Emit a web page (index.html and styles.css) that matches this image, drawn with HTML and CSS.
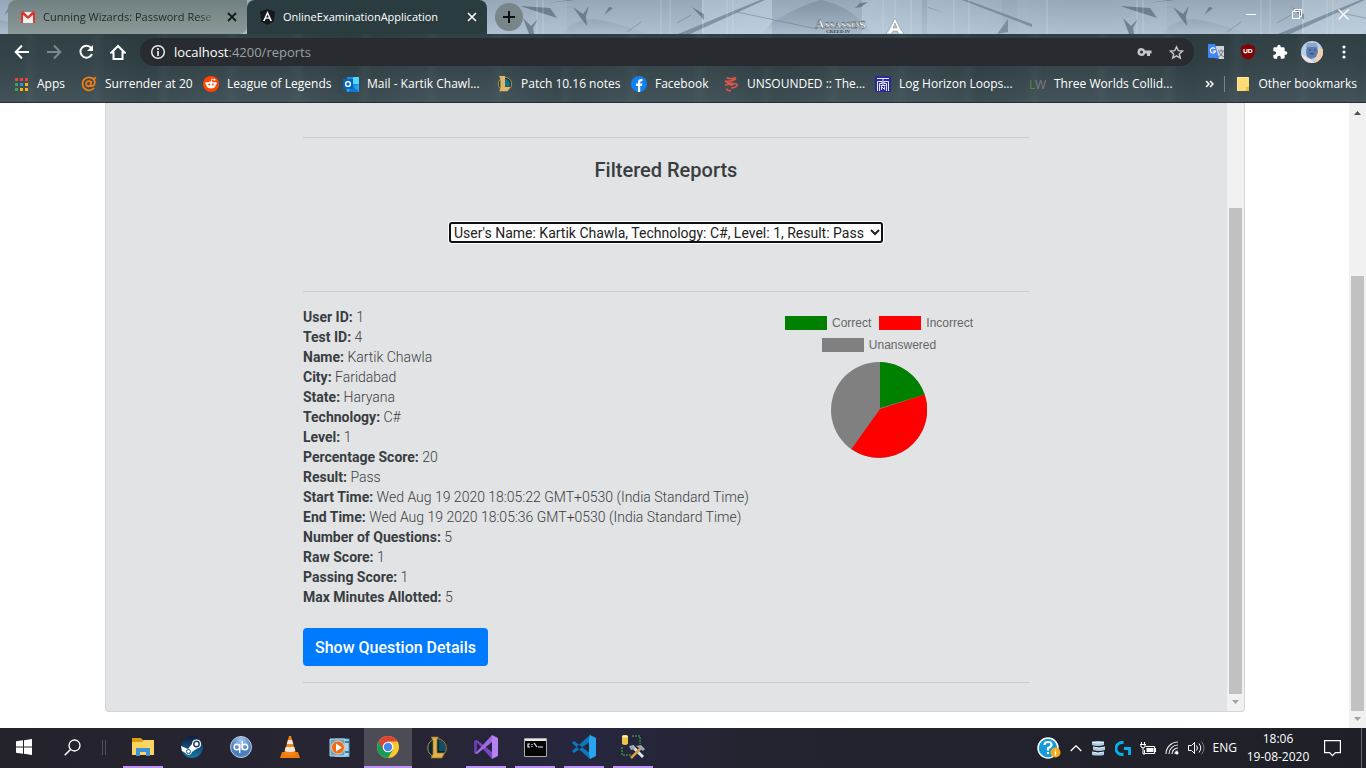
FILE: index.html
```html
<!DOCTYPE html>
<html lang="en">
<head>
<meta charset="utf-8">
<title>OnlineExaminationApplication</title>
<link rel="stylesheet" href="styles.css">
</head>
<body>
<header class="browser">
  <div class="tabstrip">
    <svg class="scene" width="100%" height="34" aria-hidden="true">
      <defs>
        <linearGradient id="sky" x1="0" x2="0" y1="0" y2="1"><stop offset="0" stop-color="#96a8b8"/><stop offset="1" stop-color="#adbfd0"/></linearGradient>
        <linearGradient id="glow"><stop offset="0" stop-color="#dbe8f4" stop-opacity="0"/><stop offset=".5" stop-color="#dbe8f4" stop-opacity=".4"/><stop offset="1" stop-color="#dbe8f4" stop-opacity="0"/></linearGradient>
        <linearGradient id="haze" x1="0" x2="0" y1="0" y2="1"><stop offset="0" stop-color="#6d8091" stop-opacity=".5"/><stop offset="1" stop-color="#6d8091" stop-opacity=".05"/></linearGradient>
        <pattern id="shards" width="600" height="34" patternUnits="userSpaceOnUse" x="487">
          <path d="M20 0h60v34H20zM215 0h70v34h-70zM375 0h60v34h-60zM440 0h75v34h-75zM530 0h50v34h-50z" fill="url(#glow)"/>
          <path d="M75 34q10-14 32-15 20 2 53 15zM285 22q35-20 50-22 25 6 40 22l12 12H275z" fill="url(#haze)"/>
          <path d="M33 6l30 2 7 10zM36 18l8 8 7-7-5 9 1 6h-5zM86 7l10 7 6-8-3 10 1 10-7-9zM117 15l5-8 4 1zM60 3L82 0h6zM205 7l12 7v6zM368 8l5-5 8-1-7 5zM441 7l16 6-15-5z" fill="#4f6273" opacity=".65"/>
          <path d="M191 34L273 0h5L203 34zM475 0l5 0 65 24 0 3zM510 34l11-15v13z" fill="#5f7283" opacity=".6"/>
          <path d="M250 12l80 17M190 23l14-8M140 32l14-10" stroke="#667888" opacity=".5"/>
          <path d="M50 0v34M56 0v34M174 0v34M183 0v34M216 0v34M240 0v34M246 0v34M396 0v34M408 0v34M424 0v34M467 0v34M482 0v34M560 0v34" stroke="#dfeaf5" opacity=".3"/>
        </pattern>
      </defs>
      <rect width="100%" height="34" fill="url(#sky)"/>
      <rect width="100%" height="34" fill="url(#shards)"/>
      <text x="815" y="28" font-family="Liberation Serif, serif" font-size="13" font-weight="bold" fill="#fff" stroke="#303840" stroke-width=".3">A<tspan font-size="9">SSASSIN</tspan></text>
      <text x="859" y="29" font-family="Liberation Serif, serif" font-size="13" font-weight="bold" fill="#fff" stroke="#303840" stroke-width=".3">S</text>
      <text x="826" y="33" font-family="Liberation Serif, serif" font-size="5" font-weight="bold" fill="#39424b">CREED IV</text>
      <path d="M895 18l5.500 11 3.500 5h-5l-2-3h-4l-2 3h-5l3.500-5zM895 23l-2 5h4z" fill="#fff" fill-rule="evenodd" stroke="#5b6873" stroke-width=".4"/>
    </svg>
    <div class="tabs">
      <div class="tab tab-idle">
        <svg width="14" height="12" viewBox="0 0 14 12"><path d="M0 1h14v11H0z" fill="#f1efec"/><path d="M0 1v11h2V4l5 4 5-4v8h2V1l-2-1-5 5-5-5z" fill="#d9392e"/></svg>
        <span class="tab-title fade">Cunning Wizards: Password Rese</span>
        <button class="close" aria-label="Close tab"><svg width="10" height="10" viewBox="0 0 10 10"><path d="M1 1l8 8M9 1L1 9" stroke="#16191b" stroke-width="1.800"/></svg></button>
      </div>
      <div class="tab tab-active">
        <svg width="15" height="16" viewBox="0 0 15 16"><path d="M7.500 0L15 2.600l-1.200 10L7.500 16l-6.300-3.400L0 2.600z" fill="#15181d"/><path d="M7.500 2L3 12h1.800l.9-2.300h3.600l.9 2.300H12zM7.500 5.500L8.800 8.400H6.200z" fill="#fff" fill-rule="evenodd"/></svg>
        <span class="tab-title">OnlineExaminationApplication</span>
        <button class="close" aria-label="Close tab"><svg width="10" height="10" viewBox="0 0 10 10"><path d="M1 1l8 8M9 1L1 9" stroke="#fff" stroke-width="1.600"/></svg></button>
      </div>
      <button class="newtab" aria-label="New tab"><svg width="12" height="12" viewBox="0 0 12 12"><path d="M6 0v12M0 6h12" stroke="#0c0e0f" stroke-width="2"/></svg></button>
      <div class="window-buttons">
        <button aria-label="Minimize"><svg width="11" height="11"><path d="M0 5.500h10" stroke="#fff"/></svg></button>
        <button aria-label="Restore"><svg width="11" height="11"><path d="M.5 2.500h7v7h-7zM2.500 2.500v-2h7v7h-2" fill="none" stroke="#fff"/></svg></button>
        <button aria-label="Close"><svg width="11" height="11"><path d="M.5.5l10 10M10.500.5l-10 10" stroke="#fff" stroke-width="1.200"/></svg></button>
      </div>
    </div>
  </div>

  <div class="toolbar">
    <nav class="nav-buttons">
      <button aria-label="Back"><svg width="16" height="16" viewBox="0 0 16 16"><path d="M15 8H2M8 1.500L1.700 8 8 14.500" fill="none" stroke="#fff" stroke-width="2"/></svg></button>
      <button aria-label="Forward"><svg width="16" height="16" viewBox="0 0 16 16"><path d="M1 8h13M8 1.500L14.300 8 8 14.500" fill="none" stroke="#7f898d" stroke-width="2"/></svg></button>
      <button aria-label="Reload"><svg width="16" height="16" viewBox="0 0 16 16"><path d="M13.200 4A6 6 0 1 0 14 10" fill="none" stroke="#fff" stroke-width="2"/><path d="M15 1v6H9z" fill="#fff"/></svg></button>
      <button aria-label="Home"><svg width="16" height="16" viewBox="0 0 16 16"><path d="M1.500 8.500L8 2l6.500 6.500H12.500V15h-9V8.500z" fill="none" stroke="#fff" stroke-width="2"/></svg></button>
    </nav>
    <div class="omnibox">
      <svg width="16" height="16" viewBox="0 0 16 16"><circle cx="8" cy="8" r="6.300" fill="none" stroke="#e8eaed" stroke-width="1.500"/><path d="M8 7v5M8 4v2" stroke="#e8eaed" stroke-width="1.700"/></svg>
      <span class="url"><b>localhost</b>:4200/reports</span>
      <svg class="key" width="15" height="10" viewBox="0 0 15 10"><path d="M4.500 1a4 4 0 1 0 3.700 5.500H10V9h3V6.500h1.500v-3H8.200A4 4 0 0 0 4.500 1zm0 2.500a1.500 1.500 0 1 1 0 3 1.500 1.500 0 0 1 0-3z" fill="#c4c6c8" fill-rule="evenodd"/></svg>
      <svg width="15" height="15" viewBox="0 0 15 15"><path d="M7.500 1.800l1.800 3.900 4.200.4-3.200 2.800 1 4.200-3.800-2.300-3.800 2.300 1-4.200L1.500 6.100l4.200-.4z" fill="none" stroke="#c8cacc" stroke-width="1.400"/></svg>
    </div>
    <div class="extensions">
      <svg width="18" height="16" viewBox="0 0 18 16"><path d="M8 2h9v13H9z" fill="#d2d4d7"/><path d="M11 7h6M14 5v2m2 0q-1 5-5 6m1-5q2 4 5 5" stroke="#75808a" fill="none"/><path d="M1 0h7l4 14H2a1 1 0 0 1-1-1z" fill="#4285f4"/><path d="M8 14h4l-2 2z" fill="#2553bb"/><path d="M8 4.800A2.600 2.600 0 1 0 8.500 7H6" stroke="#fff" stroke-width="1.200" fill="none"/></svg>
      <svg width="16" height="16" viewBox="0 0 16 16"><path d="M8 0l7 2.500V8q0 5-7 8-7-3-7-8V2.500z" fill="#800308"/><path d="M4 5v3q1.500 1.500 3 0V5M8.800 5v4M8.800 5.500h1.700a1.500 1.500 0 0 1 0 3H8.800" stroke="#fff" stroke-width="1.200" fill="none"/></svg>
      <svg width="16" height="16" viewBox="0 0 24 24"><path d="M20.500 11H19V7a2 2 0 0 0-2-2h-4V3.500a2.500 2.500 0 0 0-5 0V5H4a2 2 0 0 0-2 2v3.800h1.500a2.700 2.700 0 0 1 0 5.400H2V20a2 2 0 0 0 2 2h3.800v-1.500a2.700 2.700 0 0 1 5.400 0V22H17a2 2 0 0 0 2-2v-4h1.500a2.500 2.500 0 0 0 0-5z" fill="#fff"/></svg>
      <svg width="22" height="22" viewBox="0 0 22 22"><defs><clipPath id="face"><circle cx="11" cy="11" r="11"/></clipPath></defs><g clip-path="url(#face)"><path fill="#b9cde4" d="M0 0h22v22H0z"/><path d="M14 8h8v14h-8z" fill="#efd0b0"/><path d="M6 5q5-3 10 0l1 6-2 5-5 2-4-1-1-6z" fill="#5b7db0"/><path d="M6 2h9l2 4H5z" fill="#8aa6c8"/><path d="M0 13l8 4 6 5H0z" fill="#ebe4de"/><path d="M8 9h2M13 9h2M9 13q2-1 4 0" stroke="#26426e" stroke-width="1.200" fill="none"/></g></svg>
      <svg width="4" height="14" viewBox="0 0 4 14"><g fill="#fff"><circle cx="2" cy="2" r="1.600"/><circle cx="2" cy="7" r="1.600"/><circle cx="2" cy="12" r="1.600"/></g></svg>
    </div>
  </div>

  <nav class="bookmarks">
    <a href="#"><svg width="15" height="15" viewBox="0 0 15 15"><path d="M1 1h3v3H1zM6 1h3v3H6zM11 1h3v3h-3z" fill="#ea4335"/><path d="M1 6h3v3H1zM1 11h3v3H1z" fill="#34a853"/><path d="M6 6h3v3H6z" fill="#4285f4"/><path d="M11 6h3v3h-3zM6 11h3v3H6zM11 11h3v3h-3z" fill="#fbb605"/></svg><span>Apps</span></a>
    <a href="#"><svg width="16" height="16" viewBox="0 0 16 16"><path d="M12.500 3.200A6.500 6.500 0 1 0 13 12M10.500 5L9.300 9.500q2.700 1.500 4.200-1.500.8-2-.5-4.500M10 6.500A2.600 2.600 0 1 0 9.300 9.700M11.500 3.500L15 1.500" fill="none" stroke="#f57d12" stroke-width="1.800"/></svg><span>Surrender at 20</span></a>
    <a href="#"><svg width="16" height="16" viewBox="0 0 16 16"><circle cx="8" cy="8" r="8" fill="#ff4500"/><ellipse cx="8" cy="9" rx="4.800" ry="3.500" fill="#fff"/><circle cx="3.500" cy="7.300" r="1.300" fill="#fff"/><circle cx="12.500" cy="7.300" r="1.300" fill="#fff"/><path d="M8 6l.8-3 2.700.7M6 10.700q2 1.300 4 0" fill="none" stroke="#fff" stroke-width=".8"/><circle cx="11.500" cy="3.700" r="1" fill="#fff"/><circle cx="6.200" cy="8.500" r="1" fill="#ff4500"/><circle cx="9.800" cy="8.500" r="1" fill="#ff4500"/></svg><span>League of Legends</span></a>
    <a href="#"><svg width="16" height="16" viewBox="0 0 16 16"><path d="M4 1h12v14H3z" fill="#1490df"/><path d="M10 1h6v7h-6z" fill="#50d9ff"/><path d="M5 9l5 3 6-4v8H4z" fill="#28a8ea"/><path d="M10 10l6 6H5z" fill="#0f78d4"/><path d="M0 3h10v10H0z" fill="#0364b8"/><circle cx="5" cy="8" r="2.400" fill="none" stroke="#fff" stroke-width="1.400"/></svg><span>Mail - Kartik Chawl...</span></a>
    <a href="#"><svg width="16" height="16" viewBox="0 0 24 24"><circle cx="12" cy="12" r="10" fill="#0b3442" stroke="#b89049" stroke-width="1.500"/><path d="M12 4a8 8 0 0 1 7 11h-7z" fill="#11708a"/><path d="M3 0h9v16h8l-4 7H3l2-3V4z" fill="#e0b568"/></svg><span>Patch 10.16 notes</span></a>
    <a href="#"><svg width="16" height="16" viewBox="0 0 16 16"><circle cx="8" cy="8" r="8" fill="#1081f5"/><path d="M7 16V10H5V7.500h2V6q0-3 3-3h1.500v2.200h-1.100q-1.200 0-1.200 1.200v1.100h2.200L11 10H9.200v6z" fill="#fff"/></svg><span>Facebook</span></a>
    <a href="#"><svg width="16" height="16" viewBox="0 0 16 16"><path d="M3.500 1.500Q8 4 13 1.500M13 3Q8 6 2 5q4 3 9 2.500 4 0 3 2.500-2 2-6 2M2 9q5-1.500 8 .5M4 12.500q-1 2.500 4 2" fill="none" stroke="#dc5546" stroke-width="1.700"/></svg><span>UNSOUNDED :: The...</span></a>
    <a href="#"><svg width="16" height="16" viewBox="0 0 16 16"><path d="M0 0h16v16H0z" fill="#2c299b"/><path d="M2 2.500h12M2.500 15V5.500h4.500v2H4.500V15M13.500 15V5.500H9v2h2.500V15M8 3v6M5.500 9.500h5M6.500 14v-3.500l3 3V10.500" fill="none" stroke="#fff" stroke-width=".9"/></svg><span>Log Horizon Loops...</span></a>
    <a href="#"><svg width="17" height="16" viewBox="0 0 17 16"><text x="0" y="13" font-family="Noto Sans, sans-serif" font-size="12" fill="#598332">L<tspan fill="#787b7b">W</tspan></text></svg><span>Three Worlds Collid...</span></a>
    <button class="more" aria-label="More bookmarks"><svg width="9" height="8" viewBox="0 0 9 8"><path d="M1 1l3 3-3 3M5 1l3 3-3 3" stroke="#fff" stroke-width="1.500" fill="none"/></svg></button>
    <a class="other" href="#"><svg width="12" height="15" viewBox="0 0 12 15"><path d="M0 0h12v14H0z" fill="#fddc78"/><path d="M0 0h11v1H1v13H0z" fill="#ffe9a4"/><path d="M9 10h3v4H9z" fill="#f0bd35"/></svg><span>Other bookmarks</span></a>
  </nav>
</header>

<div class="viewport">
  <main class="page">
    <section class="card">
      <div class="card-body">
        <div class="report">
          <hr>
          <h1>Filtered Reports</h1>
          <label class="picker"><span class="sr-only">Report</span>
            <select><option>User's Name: Kartik Chawla, Technology: C#, Level: 1, Result: Pass</option></select>
          </label>
          <hr>
          <div class="details">
            <dl>
              <div><dt>User ID:</dt> <dd>1</dd></div>
              <div><dt>Test ID:</dt> <dd>4</dd></div>
              <div><dt>Name:</dt> <dd>Kartik Chawla</dd></div>
              <div><dt>City:</dt> <dd>Faridabad</dd></div>
              <div><dt>State:</dt> <dd>Haryana</dd></div>
              <div><dt>Technology:</dt> <dd>C#</dd></div>
              <div><dt>Level:</dt> <dd>1</dd></div>
              <div><dt>Percentage Score:</dt> <dd>20</dd></div>
              <div><dt>Result:</dt> <dd>Pass</dd></div>
              <div><dt>Start Time:</dt> <dd>Wed Aug 19 2020 18:05:22 GMT+0530 (India Standard Time)</dd></div>
              <div><dt>End Time:</dt> <dd>Wed Aug 19 2020 18:05:36 GMT+0530 (India Standard Time)</dd></div>
              <div><dt>Number of Questions:</dt> <dd>5</dd></div>
              <div><dt>Raw Score:</dt> <dd>1</dd></div>
              <div><dt>Passing Score:</dt> <dd>1</dd></div>
              <div><dt>Max Minutes Allotted:</dt> <dd>5</dd></div>
            </dl>
            <figure class="chart">
              <ul class="legend">
                <li><i class="swatch correct"></i>Correct</li>
                <li><i class="swatch incorrect"></i>Incorrect</li>
                <li><i class="swatch unanswered"></i>Unanswered</li>
              </ul>
              <svg width="96" height="96" viewBox="-48 -48 96 96" role="img" aria-label="Question results"><circle r="48" fill="gray"/><path d="M1-2V-48A48 48 0 0 1 45.700-15.500z" fill="green"/><path d="M1-1L45.700-15.500A48 48 0 0 1-27.500 39z" fill="red"/></svg>
            </figure>
          </div>
          <button class="primary">Show Question Details</button>
          <hr>
        </div>
      </div>
      <div class="scrollbar card-scroll"><span class="thumb"></span><svg width="7" height="4"><path d="M0 0h7L3.500 4z" fill="#a3a3a3"/></svg></div>
    </section>
  </main>
  <div class="scrollbar page-scroll"><svg width="7" height="4"><path d="M0 4h7L3.500 0z" fill="#505050"/></svg><span class="thumb"></span><svg width="7" height="4"><path d="M0 0h7L3.500 4z" fill="#a3a3a3"/></svg></div>
</div>

<footer class="taskbar">
  <button class="task" aria-label="Start"><svg width="16" height="16" viewBox="0 0 16 16"><path d="M0 2.300l7-1v6.200H0zM8 1.200L16 0v7.500H8zM0 8.500h7v6.200l-7-1zM8 8.500h8V16l-8-1.200z" fill="#fff"/></svg></button>
  <button class="task" aria-label="Search"><svg width="17" height="17" viewBox="0 0 17 17"><circle cx="10.500" cy="6.500" r="5.500" fill="none" stroke="#fff" stroke-width="1.300"/><path d="M6.500 10.500L.7 16.300" stroke="#fff" stroke-width="1.500"/></svg></button>
  <span class="grip"></span>
  <button class="task open" aria-label="File Explorer"><svg width="22" height="20" viewBox="0 0 22 20"><path d="M0 1h9l2 2h11v15H0z" fill="#dc9e10"/><path d="M0 5h10l2-2h10v15H0z" fill="#fcd462"/><path d="M4 11h14v8h-4v-4H8v4H4z" fill="#3d93d5"/></svg></button>
  <button class="task" aria-label="Steam"><svg width="22" height="22" viewBox="0 0 22 22"><defs><linearGradient id="st" x2="0" y2="1"><stop stop-color="#121d3d"/><stop offset="1" stop-color="#127ba9"/></linearGradient></defs><circle cx="11" cy="11" r="11" fill="url(#st)"/><path d="M0 10l7 3 4-5a4.500 4.500 0 1 1 5 4.500L11 16a3.500 3.500 0 0 1-6.500 1L1 15z" fill="#fff"/><circle cx="15.500" cy="8" r="2.700" fill="none" stroke="#1c3658" stroke-width="1.400"/><circle cx="7.500" cy="15.500" r="2" fill="none" stroke="#176388"/></svg></button>
  <button class="task" aria-label="qBittorrent"><svg width="22" height="22" viewBox="0 0 22 22"><defs><radialGradient id="qb" cy=".2"><stop stop-color="#aac8ee"/><stop offset="1" stop-color="#4a7fc0"/></radialGradient></defs><circle cx="11" cy="11" r="10.500" fill="url(#qb)" stroke="#c0cfe2"/><circle cx="6.900" cy="11" r="2.800" fill="none" stroke="#fff" stroke-width="1.400"/><circle cx="15" cy="11" r="2.800" fill="none" stroke="#fff" stroke-width="1.400"/><path d="M9.700 8v9M12.200 5v9" stroke="#fff" stroke-width="1.400"/></svg></button>
  <button class="task" aria-label="VLC"><svg width="20" height="22" viewBox="0 0 20 22"><path d="M2 16h16l2 6H0z" fill="#f17b09"/><path d="M9 0h2l5 18q-6 3-12 0z" fill="#f28618"/><path d="M8 4h4l1.200 4H6.800zM5.700 11h8.600l1.100 4q-5.400 2-10.800 0z" fill="#f0e8e0"/></svg></button>
  <button class="task" aria-label="Media Player"><svg width="21" height="19" viewBox="0 0 21 19"><path d="M6 1h14v18H6z" fill="#a7d5e9" stroke="#5c9db9"/><path d="M1 1h15v17H1z" fill="#65a8cc" stroke="#b1dced"/><path d="M16 3h4v2h-4zM16 13h4v2h-4z" fill="#387da0"/><circle cx="9" cy="9.500" r="6.500" fill="#f16b16" stroke="#ffc49c"/><path d="M7 5.500v8l6-4z" fill="#fff"/></svg></button>
  <button class="task open current" aria-label="Chrome"><svg width="22" height="22" viewBox="0 0 22 22"><circle cx="11" cy="11" r="11" fill="#fbc72e"/><path d="M11 11L1.500 5.500A11 11 0 0 0 11 22l4.800-8.200z" fill="#1a9c59"/><path d="M1.500 5.500L6.200 13.700 11 5.500h9.500A11 11 0 0 0 1.500 5.500z" fill="#dc4437"/><circle cx="11" cy="11" r="5.300" fill="#fff"/><circle cx="11" cy="11" r="4.200" fill="#4587ef"/></svg></button>
  <button class="task" aria-label="League of Legends"><svg width="22" height="23" viewBox="0 0 22 23"><circle cx="11" cy="12" r="9.300" fill="#0a2734" stroke="#b18c42"/><path d="M13 4a8 8 0 0 1 6 11h-6z" fill="#0f4f62"/><path d="M5 1h7.500L11 3v14h7.500L16 22H5l2-4V4z" fill="#e0b24c" stroke="#95702c" stroke-width=".7"/></svg></button>
  <button class="task open" aria-label="Visual Studio"><svg width="24" height="24" viewBox="0 0 24 24"><path d="M0 6l3-1 15 12v7L3 7.500v9L0 18z" fill="#7a45c4"/><path d="M0 18l3 1L18 7V0L3 16.500z" fill="#a06ae2"/><path d="M0 6v12l3-1.500v-9z" fill="#673ab0"/><path d="M18 0l6 3v18l-6 3z" fill="#b583f0"/></svg></button>
  <button class="task open" aria-label="Command Prompt"><svg width="23" height="19" viewBox="0 0 23 19"><path d="M.5.5h22v18H.5z" fill="#050505" stroke="#a9abad"/><path d="M1 1h21v2H1z" fill="#e6e7e8"/><path d="M6 6H4v3h2M8 6v1M8 8v1M10 5l3 4M14 9h5" fill="none" stroke="#eee" stroke-width="1.200"/></svg></button>
  <button class="task open" aria-label="Visual Studio Code"><svg width="24" height="24" viewBox="0 0 24 24"><path d="M0 8l2-2 17 13-1 5zM0 16l2 2L19 6l-1-6z" fill="#087abc"/><path d="M18 0l6 3v18l-6 3-1-5V5z" fill="#29a4ef"/></svg></button>
  <button class="task open" aria-label="SQL Server"><svg width="24" height="24" viewBox="0 0 24 24"><path d="M1 1q3-2 6 0v8q-3 2-6 0z" fill="#efc245"/><ellipse cx="4" cy="1.500" rx="3" ry="1.300" fill="#fff1a4"/><path d="M11 1h8v8M1 12v8h9" fill="none" stroke="#41bd4b" stroke-dasharray="2 1"/><path d="M11 11l11 11" stroke="#dce2e8" stroke-width="3"/><path d="M10 23l10-10" stroke="#d29d49" stroke-width="2.500"/><path d="M15 11l5-1 4 4-2 2-4-3zM8 11l2 4 4-1-1-4" fill="#9da7b2"/></svg></button>
  <div class="tray">
    <svg width="24" height="22" viewBox="0 0 24 22"><circle cx="11" cy="11" r="10" fill="#149bd7" stroke="#fff" stroke-width="1.500"/><path d="M7.500 8q0-3 3.500-3t3.500 2.500Q14.500 10 11 11v2.500M11 15v2" stroke="#fff" stroke-width="2.200" fill="none"/><circle cx="18.500" cy="15.500" r="5" fill="#f4aa16"/><path d="M18.500 14.500v4M18.500 12.500v1" stroke="#fff" stroke-width="1.400"/></svg>
    <svg width="12" height="7" viewBox="0 0 12 7"><path d="M.7 6L6 .8 11.300 6" fill="none" stroke="#fff" stroke-width="1.300"/></svg>
    <svg width="15" height="15" viewBox="0 0 15 15"><path d="M1 1q6-2 12 0v3q-6 2-12 0zM2 6q6 2 12 0v3q-6 2-12 0zM1 11q6 2 12 0v3q-6 1-12 0z" fill="#a9cbe2"/><path d="M1 1q6 2 12 0M2 6q6 2 12 0M1 11q6 2 12 0" stroke="#ecf7ff" fill="none"/></svg>
    <svg width="16" height="15" viewBox="0 0 16 15"><path d="M8.500 1.500H7a6 6 0 0 0 0 12h1.500M9 7.500h5.500V14" fill="none" stroke="#00b5ef" stroke-width="2.800"/></svg>
    <svg width="16" height="13" viewBox="0 0 16 13"><path d="M5.500 4.500h9v7H4.500V8M15.500 6v4" fill="none" stroke="#fff"/><path d="M6.500 6h7v4h-7z" fill="#fff"/><path d="M1.500 0v3M4.500 0v3M0 2.500h6M1 3v2q2 2 4 0V3M3 6v6h2" fill="none" stroke="#fff"/></svg>
    <svg width="14" height="14" viewBox="0 0 14 14"><path d="M1 13A12 12 0 0 1 13 1M4 13a9 9 0 0 1 9-9M7 13a6 6 0 0 1 6-6M10 13a3 3 0 0 1 3-3" fill="none" stroke="#e2e2e4" stroke-width="1.200"/><circle cx="12" cy="12" r="1.500" fill="#fff"/></svg>
    <svg width="17" height="14" viewBox="0 0 17 14"><path d="M.5 4.500h3l3-3v11l-3-3h-3z" fill="none" stroke="#fff"/><path d="M8.500 4.500q2 2.500 0 5M11 2.500q3.500 4.500 0 9" fill="none" stroke="#fff"/><path d="M13.500.7q5 6.300 0 12.600" fill="none" stroke="#777984"/></svg>
    <span class="lang">ENG</span>
    <time class="clock"><span>18:06</span><span>19-08-2020</span></time>
    <svg class="notice" width="17" height="17" viewBox="0 0 17 17"><path d="M.6.6h15.800v12h-5L8.500 15.700 5.600 12.600h-5z" fill="none" stroke="#fff" stroke-width="1.200"/></svg>
    <span class="peek"></span>
  </div>
</footer>
</body>
</html>
```
FILE: styles.css
```css
* { box-sizing: border-box; }
body {
  margin: 0;
  height: 100vh;
  display: flex;
  flex-direction: column;
  overflow: hidden;
  background: #fff;
  font-family: Roboto, "Liberation Sans", sans-serif;
}
button { border: 0; padding: 0; background: none; font: inherit; display: flex; align-items: center; justify-content: center; }
svg { display: block; flex: none; }
.sr-only { position: absolute; width: 1px; height: 1px; overflow: hidden; clip-path: inset(50%); }

.browser {
  flex: none;
  font: 12px/16px "Open Sans", "Noto Sans", sans-serif;
  color: #fff;
  border-bottom: 1px solid #243034;
  background:
    repeating-linear-gradient(91deg, transparent 0 23px, rgba(150, 180, 180, .05) 31px, transparent 39px 67px),
    repeating-linear-gradient(89deg, transparent 0 90px, rgba(10, 20, 25, .12) 140px, transparent 210px),
    linear-gradient(#2b3c41, #344449 60%, #435359);
}
.tabstrip { position: relative; height: 34px; overflow: hidden; }
.scene { position: absolute; left: 0; top: 0; }
.tabs { position: relative; display: flex; height: 34px; padding-left: 8px; font-size: 11px; }
.tab { display: flex; align-items: center; width: 240px; padding: 0 10px 0 13px; gap: 8px; }
.tab-idle { width: 239px; background: linear-gradient(#718081, #8b9998); border-radius: 8px 0 8px 0; color: #23292b; }
.tab-active { background: #2b3c41; border-radius: 8px 8px 0 0; }
.tab-title { flex: 1; min-width: 0; overflow: hidden; white-space: nowrap; }
.fade { mask-image: linear-gradient(90deg, #000 88%, transparent); }
.newtab { align-self: center; width: 28px; height: 28px; margin-left: 8px; border-radius: 50%; background: #78868a; }
.window-buttons { display: flex; margin-left: auto; height: 28px; }
.window-buttons button { width: 46px; }

.toolbar { display: flex; align-items: center; height: 36px; padding: 0 6px 0 14px; }
.nav-buttons { display: flex; gap: 16px; width: 126px; }
.omnibox { flex: 1; display: flex; align-items: center; height: 28px; border-radius: 14px; padding: 0 10px; gap: 8px; background: #282c30; }
.url { flex: 1; font-size: 13px; color: #9aa0a4; }
.url b { font-weight: 400; color: #fff; }
.key { margin-right: 9px; }
.extensions { display: grid; grid-template-columns: repeat(5, 32px); place-items: center; margin-left: 6px; }

.bookmarks {
  display: grid;
  grid-template-columns: 67px 122px 140px 154px 134px 92px 152px 154px 1fr auto auto;
  align-items: center;
  height: 32px;
  padding: 0 9px 4px 14px;
  white-space: nowrap;
}
.bookmarks a { display: flex; align-items: center; gap: 8px; color: #fff; text-decoration: none; }
.more { width: 20px; height: 16px; }
.bookmarks .other { gap: 9px; margin-left: 5px; padding-left: 12px; border-left: 1px solid #77858a; }

.viewport { flex: 1; min-height: 0; display: flex; }
.page { flex: 1; padding: 0 104px 16px; display: flex; }
.card {
  flex: 1;
  display: flex;
  max-width: 1140px;
  margin: 0 auto;
  background: #e2e3e5;
  border: 1px solid #d2d4d8;
  border-top: 0;
  border-radius: 0 0 4px 4px;
  overflow: hidden;
}
.card-body { flex: 1; padding-top: 34px; }
.report { max-width: 726px; margin: 0 auto; color: #383d41; font-weight: 300; }
.report hr { height: 1px; margin: 0; border: 0; background: #c8cacd; }
.report h1 { margin: 20px 0 0; font-size: 20px; line-height: 24px; font-weight: 500; text-align: center; }
.picker { display: flex; justify-content: center; margin: 40px 0 48px; }
.picker select {
  width: 434px;
  height: 21px;
  padding: 0 1px;
  border: 0;
  border-radius: 3px;
  box-shadow: inset 0 0 0 2px #101010, 0 0 0 1px #fff;
  background: #fff;
  color: #222;
  font: 400 14px/20px Roboto, sans-serif;
}
.details { display: flex; justify-content: space-between; padding-top: 15px; }
.details dl { margin: 0; font-size: 14px; line-height: 20px; white-space: nowrap; }
.details dt, .details dd { display: inline; margin: 0; }
.details dt { font-weight: 700; }
.chart { width: 192px; margin: 9px 54px 0 0; display: flex; flex-direction: column; align-items: center; gap: 10px; }
.legend { display: flex; flex-wrap: wrap; justify-content: center; gap: 8px; margin: 0; padding: 0; list-style: none; font: 12px/14px "Liberation Sans", sans-serif; color: #666; }
.legend li { display: flex; gap: 5px; }
.swatch { width: 42px; height: 14px; }
.correct { background: green; }
.incorrect { background: red; }
.unanswered { background: gray; }
.primary { height: 38px; margin: 21px 0 16px; padding: 0 12px; border-radius: 4px; background: #007bff; color: #fff; font-size: 16px; font-weight: 500; }

.scrollbar { flex: none; width: 17px; display: flex; flex-direction: column; align-items: center; background: #f1f1f1; }
.thumb { flex: 1; width: 13px; background: #c1c1c1; }
.card-scroll { padding: 105px 0 7px; gap: 6px; }
.page-scroll { padding: 8px 0 7px; }
.page-scroll .thumb { margin: 161px 0 6px; }

.taskbar { flex: none; display: flex; height: 40px; background: linear-gradient(90deg, #24232c, #272534 30%, #26263f 43%, #242430 55%, #1e2027); color: #fff; font: 12px/18px "Open Sans", "Noto Sans", sans-serif; }
.task { width: 48px; margin-right: 1px; border-bottom: 2px solid transparent; }
.task:nth-child(-n+2) { margin-right: 0; }
.grip { width: 4px; height: 15px; margin: 12px 13px 0 6px; border: solid #50505a; border-width: 0 1px; }
.open { background: linear-gradient(#bd93f9, #bd93f9) bottom / 40px 2px no-repeat; background-origin: border-box; }
.current { background: #4c4c56; border-color: #bd93f9; }
.tray { display: flex; align-items: center; margin-left: auto; gap: 9px; }
.lang { margin-left: -1px; }
.clock { display: flex; flex-direction: column; width: 64px; text-align: center; white-space: nowrap; }
.notice { margin-left: 5px; }
.peek { width: 5px; height: 40px; margin-left: 11px; border-left: 1px solid #686a70; }
```
